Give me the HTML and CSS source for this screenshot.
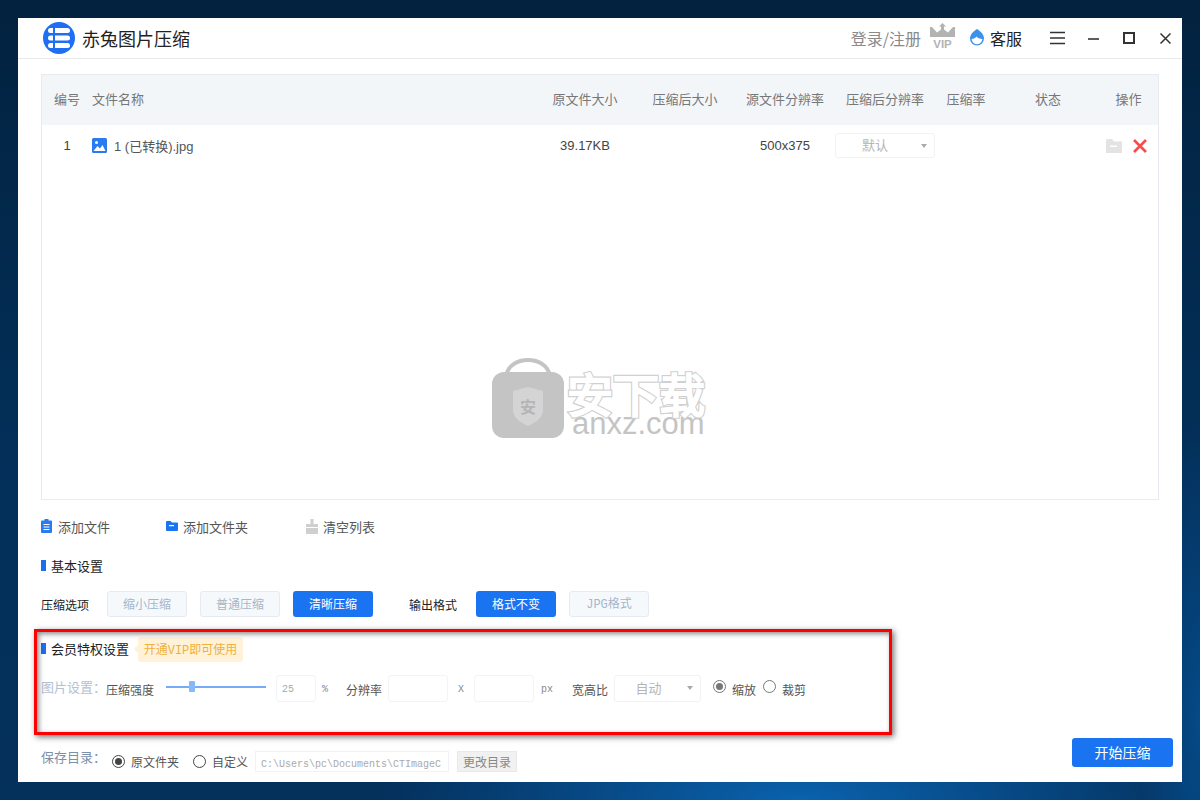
FILE: index.html
```html
<!DOCTYPE html>
<html lang="zh">
<head>
<meta charset="utf-8">
<title>赤兔图片压缩</title>
<link rel="stylesheet" href="styles.css">
</head>
<body>
<div class="window">
  <header class="titlebar">
    <svg class="logo" viewBox="0 0 32 32" width="32" height="32">
      <circle cx="16" cy="16" r="16" fill="#1f6ff2"/>
      <rect x="5" y="6" width="22" height="5" rx="2.500" fill="#fff"/>
      <rect x="5" y="13.500" width="22" height="5" rx="2.500" fill="#fff"/>
      <rect x="5" y="21" width="22" height="5" rx="2.500" fill="#fff"/>
      <rect x="10" y="5" width="2" height="22" fill="#1f6ff2"/>
    </svg>
    <span class="app-name">赤兔图片压缩</span>
    <span class="login">登录/注册</span>
    <svg class="vip" viewBox="0 0 25 25" width="25" height="25">
      <path d="M12.500 0L16 3.500h-2v3l4 3 5-5.500h2v10H0V4h2l5 5.500 4-3v-3H9z" fill="#b3b3b3"/>
      <text x="12.500" y="25" text-anchor="middle" class="vip-text">VIP</text>
    </svg>
    <svg class="service-icon" viewBox="0 0 16 17" width="16" height="17">
      <path d="M8 0C11 2 15 5 15 9.500a7 7 0 0 1-14 0C1 5 5 2 8 0z" fill="#3b93e8"/>
      <path d="M2.500 10c2.500-.3 4-1 5-2.500 1 1.500 3 2.500 6 2.500-.5 3.500-3 5.200-5.500 5.200S3 13.500 2.500 10z" fill="#fff"/>
    </svg>
    <span class="service">客服</span>
    <svg class="menu-icon" viewBox="0 0 15 14" width="15" height="14">
      <path d="M0 1.500h15M0 7h15M0 12.500h15" stroke="#333" stroke-width="1.700"/>
    </svg>
    <svg class="min-icon" viewBox="0 0 11 11" width="11" height="11">
      <path d="M0 6h11" stroke="#333" stroke-width="1.600"/>
    </svg>
    <svg class="max-icon" viewBox="0 0 12 12" width="12" height="12">
      <rect x="1" y="1" width="10" height="10" fill="none" stroke="#333" stroke-width="2"/>
    </svg>
    <svg class="close-icon" viewBox="0 0 11 11" width="11" height="11">
      <path d="M.5.500l10 10M10.500.500l-10 10" stroke="#333" stroke-width="1.500"/>
    </svg>
  </header>

  <main class="content">
    <section class="table">
      <div class="row head">
        <span class="c">编号</span>
        <span>文件名称</span>
        <span class="c">原文件大小</span>
        <span class="c">压缩后大小</span>
        <span class="c">源文件分辨率</span>
        <span class="c">压缩后分辨率</span>
        <span class="c">压缩率</span>
        <span class="c">状态</span>
        <span class="c">操作</span>
      </div>
      <div class="row item">
        <span class="c">1</span>
        <span class="file">
          <svg viewBox="0 0 15 15" width="15" height="15">
            <rect width="15" height="15" rx="1.500" fill="#2a7af0"/>
            <circle cx="4.500" cy="4.500" r="1.500" fill="#fff"/>
            <path d="M1.500 13l4-5 2.500 2.500 2.500-3.500 3 6z" fill="#fff"/>
          </svg>
          1 (已转换).jpg
        </span>
        <span class="c">39.17KB</span>
        <span class="c"></span>
        <span class="c">500x375</span>
        <span class="c"><span class="select small">默认<i class="caret"></i></span></span>
        <span class="c"></span>
        <span class="c"></span>
        <span class="ops">
          <svg viewBox="0 0 16 14" width="16" height="14">
            <path d="M0 1.500A1.500 1.500 0 0 1 1.500 0H6l2 2.500h8V14H0z" fill="#e3e3e3"/>
            <rect x="4" y="6.500" width="7" height="1.500" fill="#fff"/>
          </svg>
          <svg viewBox="0 0 14 14" width="14" height="14">
            <path d="M1 1l12 12M13 1L1 13" stroke="#fb4a4a" stroke-width="2.600"/>
          </svg>
        </span>
      </div>
      <div class="watermark">
        <svg viewBox="0 0 72 80" width="72" height="80">
          <path d="M14 18C16 7 26 2 36 2s20 5 22 16" fill="none" stroke="#c4c4c4" stroke-width="4"/>
          <rect y="14" width="72" height="66" rx="12" fill="#c4c4c4"/>
          <path d="M36 29l15 4v19c0 8-8 13-15 16-7-3-15-8-15-16V33z" fill="#d4d4d4"/>
          <text x="36" y="55" text-anchor="middle" class="wm-shield">安</text>
        </svg>
        <div class="wm-text">
          <div class="wm-cn" data-text="安下载">安下载</div>
          <div class="wm-en">anxz.com</div>
        </div>
      </div>
    </section>

    <div class="toolbar">
      <span class="tool t1">
        <svg viewBox="0 0 11 14" width="11" height="14">
          <path d="M1 1.500h2.500V0h4v1.500H10a1 1 0 0 1 1 1V13a1 1 0 0 1-1 1H1a1 1 0 0 1-1-1V2.500a1 1 0 0 1 1-1z" fill="#2a7af0"/>
          <path d="M2.500 5.500h6M2.500 8h6M2.500 10.500h6" stroke="#fff"/>
        </svg>添加文件</span>
      <span class="tool t2">
        <svg viewBox="0 0 12 10" width="12" height="10">
          <path d="M0 1a1 1 0 0 1 1-1h3.500l1.500 1.500h5a1 1 0 0 1 1 1V9a1 1 0 0 1-1 1H1a1 1 0 0 1-1-1z" fill="#1a73f0"/>
          <rect x="3" y="4" width="5" height="1.200" fill="#fff"/>
        </svg>添加文件夹</span>
      <span class="tool t3">
        <svg viewBox="0 0 12 15" width="12" height="15">
          <path d="M4.500 0h3v5H12v3H0V5h4.500zM0 9h12v6H0z" fill="#cfcfcf"/>
        </svg>清空列表</span>
    </div>

    <h2 class="section basic">基本设置</h2>

    <div class="options">
      <span class="label">压缩选项</span>
      <span class="btn off">缩小压缩</span>
      <span class="btn off">普通压缩</span>
      <span class="btn on">清晰压缩</span>
      <span class="label out">输出格式</span>
      <span class="btn on">格式不变</span>
      <span class="btn off mono-btn">JPG格式</span>
    </div>

    <div class="vip-line">
      <h2 class="section">会员特权设置</h2>
      <span class="vip-tag">开通VIP即可使用</span>
    </div>

    <div class="img-row">
      <span class="faded">图片设置：</span>
      <span class="txt strength">压缩强度</span>
      <span class="slider"><i class="thumb"></i></span>
      <span class="inp w40 mono">25</span>
      <span class="unit pct">%</span>
      <span class="txt res">分辨率</span>
      <span class="inp w60"></span>
      <span class="unit x">X</span>
      <span class="inp w60"></span>
      <span class="unit px">px</span>
      <span class="txt ratio">宽高比</span>
      <span class="select big">自动<i class="caret"></i></span>
      <span class="radio checked gray r1"></span><span class="txt">缩放</span>
      <span class="radio gray r2"></span><span class="txt">裁剪</span>
    </div>

    <div class="save-row">
      <span class="save-label">保存目录：</span>
      <span class="radio checked dark"></span><span class="txt">原文件夹</span>
      <span class="radio dark r3"></span><span class="txt">自定义</span>
      <span class="path"><span class="path-text">C:\Users\pc\Documents\CTImageC</span></span>
      <span class="change">更改目录</span>
      <span class="start">开始压缩</span>
    </div>
  </main>
</div>
<div class="annotation"></div>
</body>
</html>
```
FILE: styles.css
```css
* { box-sizing: border-box; }
html, body { margin: 0; height: 100%; }
body {
  width: 1200px;
  height: 800px;
  overflow: hidden;
  padding: 18px;
  font-family: "Noto Sans CJK SC", "Liberation Sans", sans-serif;
  font-size: 12px;
  background:
    radial-gradient(ellipse 420px 120px at 800px 800px, #0a62ae 0%, rgba(10,98,174,0) 100%),
    radial-gradient(ellipse 60px 300px at 1200px 720px, #054a88 0%, rgba(5,74,136,0) 100%),
    linear-gradient(180deg, #02223f 0%, #03305a 60%, #04305c 100%);
}
svg { display: block; flex: none; }
.window {
  width: 1164px;
  height: 764px;
  background: #fff;
  display: flex;
  flex-direction: column;
}
.titlebar {
  height: 41px;
  flex: none;
  border-bottom: 1px solid #e9e9e9;
  display: flex;
  align-items: center;
  padding-left: 25px;
}
.app-name { margin-left: 7px; font-size: 18px; color: #222; }
.login { margin-left: auto; font-size: 16px; color: #8a8a8a; }
.vip { margin-left: 9px; margin-top: -5px; overflow: visible; }
.vip-text { font: bold 11.500px "Liberation Sans", sans-serif; fill: #b3b3b3; }
.service-icon { margin-left: 14px; margin-top: -2px; }
.service { margin-left: 5px; font-size: 16px; color: #222; }
.menu-icon { margin-left: 28px; margin-top: 0; }
.min-icon { margin-left: 23px; margin-top: 0; }
.max-icon { margin-left: 24px; margin-top: 0; }
.close-icon { margin-left: 25px; margin-right: 11px; margin-top: 1px; }

.content {
  flex: 1;
  display: flex;
  flex-direction: column;
  padding: 15px 9px 10px 23px;
}
.table {
  position: relative;
  width: 1118px;
  height: 426px;
  flex: none;
  border: 1px solid #e8ebef;
}
.row {
  display: grid;
  grid-template-columns: 50px 443px 100px 100px 100px 100px 62px 102px 59px;
  align-items: center;
  color: #555;
}
.head { height: 50px; padding-bottom: 3px; background: #f3f6f9; color: #777; font-size: 13px; }
.item { height: 42px; padding-bottom: 2px; font-size: 13px; color: #444; }
.c { text-align: center; }
.file { display: flex; align-items: center; gap: 7px; font-family: "Liberation Sans", "Noto Sans CJK SC", sans-serif; font-size: 13px; color: #555; }
.item > .c { font-family: "Liberation Sans", "Noto Sans CJK SC", sans-serif; font-size: 13px; }
.ops { display: flex; align-items: center; gap: 11px; padding-left: 7px; margin-top: 2px; }

.select {
  position: relative;
  display: inline-block;
  border: 1px solid #eef3f8;
  border-radius: 3px;
  color: #b5b5b5;
  text-align: center;
}
.select.small { width: 100px; height: 25px; line-height: 21px; font-size: 13px; padding-right: 20px; font-family: "Noto Sans CJK SC", sans-serif; }
.select.big { width: 87px; height: 27px; line-height: 23px; font-size: 13px; padding-right: 18px; margin-left: 6px; }
.caret {
  position: absolute;
  right: 7px;
  top: 10px;
  border: 3px solid transparent;
  border-top: 4px solid #aaa;
  border-bottom: 0;
}

.watermark {
  position: absolute;
  left: 450px;
  top: 283px;
  display: flex;
  gap: 3px;
}
.wm-shield { font-size: 16px; fill: #b5b5b5; font-weight: 700; }
.wm-text { padding-top: 11px; }
.wm-cn {
  position: relative;
  font-size: 46px;
  line-height: 46px;
  font-weight: 400;
  color: #fff;
  -webkit-text-stroke: 4.500px #d0d0d0;
  height: 46px;
}
.wm-cn::after {
  content: attr(data-text);
  position: absolute;
  left: 0;
  top: 0;
  -webkit-text-stroke: 2.200px #fff;
}
.wm-en {
  font: 31px/18px "Liberation Sans", sans-serif;
  color: #c4c4c4;
  padding-left: 5px;
}

.toolbar {
  margin-top: 16px;
  height: 20px;
  display: flex;
  align-items: center;
  font-size: 13px;
  color: #555;
}
.tool { display: flex; align-items: center; gap: 6px; }
.t2 { margin-left: 56px; gap: 5px; }
.t3 { margin-left: 58px; gap: 5px; }

.section {
  position: relative;
  margin: 0;
  font-weight: 400;
  font-size: 13px;
  line-height: 20px;
  color: #222;
  padding-left: 10px;
  flex: none;
}
.section::before {
  content: "";
  position: absolute;
  left: 0;
  top: 4px;
  width: 5px;
  height: 11px;
  background: #1a6ff0;
}
.basic { margin-top: 20px; height: 20px; }

.options {
  margin-top: 15px;
  display: flex;
  align-items: center;
  height: 26px;
  color: #222;
  font-size: 12px;
}
.label { width: 66px; flex: none; }
.out { width: 67px; margin-left: 23px; }
.btn {
  width: 80px;
  height: 26px;
  line-height: 24px;
  text-align: center;
  border-radius: 3px;
  border: 1px solid transparent;
  margin-right: 13px;
  flex: none;
}
.btn.off { background: #f6f9fc; border-color: #e6ebf3; color: #a5b6ca; }
.btn.on { background: #1a73f0; color: #fff; }
.mono-btn { font-family: "Liberation Mono", "Noto Sans CJK SC", monospace; line-height: 27px; }

.vip-line {
  margin-top: 20px;
  height: 25px;
  display: flex;
  align-items: center;
}
.vip-line .section { margin-top: -2px; }
.vip-tag {
  position: relative;
  margin-left: 9px;
  width: 105px;
  height: 25px;
  line-height: 29px;
  text-align: center;
  background: #fff2d8;
  color: #efb03e;
  border-radius: 3px;
  font-size: 12px;
  font-family: "Liberation Mono", "Noto Sans CJK SC", monospace;
}
.vip-tag::before {
  content: "";
  position: absolute;
  left: -4px;
  top: 8px;
  border: 4px solid transparent;
  border-right-color: #fff2d8;
  border-left: 0;
}

.img-row {
  margin-top: 13px;
  height: 27px;
  display: flex;
  align-items: center;
  font-size: 12px;
  color: #666;
}
.faded {
  width: 65px;
  flex: none;
  color: #b4c1d2;
  font-size: 13px;
  font-family: "Noto Sans CJK TC", sans-serif;
  margin-top: -4px;
}
.txt { flex: none; color: #555; font-size: 12px; }
.img-row .txt { margin-top: 2px; }
.strength { width: 48px; }
.slider {
  position: relative;
  width: 100px;
  height: 2px;
  margin: -3px 10px 0 12px;
  background: #76acf6;
  flex: none;
}
.thumb {
  position: absolute;
  left: 23px;
  top: -5px;
  width: 6px;
  height: 11px;
  border-radius: 1px;
  background: #86b9f8;
}
.inp {
  height: 27px;
  border: 1px solid #f1f4f8;
  border-radius: 3px;
  flex: none;
  line-height: 25px;
  color: #aaa;
  text-align: left;
  padding-left: 5px;
}
.w40 { width: 40px; }
.w60 { width: 60px; }
.mono { font: 10px/27px "Liberation Mono", monospace; }
.unit { font: 10px "Liberation Mono", monospace; color: #888; flex: none; text-align: center; margin-top: 2px; }
.pct { width: 18px; }
.res { margin-left: 12px; width: 42px; }
.x { width: 26px; }
.px { width: 26px; }
.ratio { margin-left: 12px; width: 36px; }
.radio {
  width: 13px;
  height: 13px;
  border-radius: 50%;
  border: 1px solid #777;
  flex: none;
  position: relative;
  margin-right: 6px;
}
.radio.checked::after {
  content: "";
  position: absolute;
  left: 2px;
  top: 2px;
  width: 7px;
  height: 7px;
  border-radius: 50%;
  background: #777;
}
.radio.dark { border-color: #444; }
.radio.dark.checked::after { background: #444; }
.r1 { margin-left: 12px; margin-top: -4px; }
.r2 { margin-left: 7px; margin-top: -4px; }
.r3 { margin-left: 14px; }

.save-row {
  margin-top: auto;
  display: flex;
  align-items: center;
  height: 21px;
  position: relative;
}
.save-label {
  width: 71px;
  flex: none;
  font-size: 13px;
  font-family: "Noto Sans CJK TC", sans-serif;
  color: #7c90aa;
  margin-top: -10px;
}
.path {
  margin-left: 7px;
  width: 194px;
  height: 21px;
  border: 1px solid #f1f1f8;
  padding-left: 5px;
  flex: none;
}
.path-text {
  display: block;
  width: 182px;
  overflow: hidden;
  white-space: nowrap;
  font: 10px/25px "Liberation Mono", monospace;
  height: 19px;
  color: #aaa;
}
.change {
  margin-left: 8px;
  width: 60px;
  height: 21px;
  line-height: 19px;
  text-align: center;
  background: #f1f1f1;
  border: 1px solid #e9e9e9;
  color: #888;
  flex: none;
}
.start {
  margin-left: auto;
  width: 101px;
  height: 29px;
  line-height: 29px;
  margin-top: -18px;
  text-align: center;
  background: #1a73f0;
  color: #fff;
  border-radius: 3px;
  font-size: 14px;
  flex: none;
}

.annotation {
  position: absolute;
  left: 34px;
  top: 629px;
  width: 858px;
  height: 106px;
  border: 3px solid #f00;
  box-shadow: 2px 2px 6px rgba(0,0,0,.55), inset 2px 2px 5px rgba(0,0,0,.45);
  pointer-events: none;
}
```
